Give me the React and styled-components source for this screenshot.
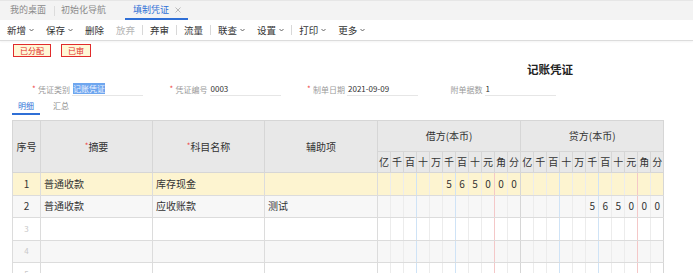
import React from 'react';
import styled, { createGlobalStyle, css } from 'styled-components';

/* --------------------  global  --------------------*/

const GlobalStyle = createGlobalStyle`
  html, body {
    margin: 0;
    padding: 0;
    overflow: hidden;
    background: #fff;
  }
  body {
    font-family: "Noto Sans CJK SC", "Noto Sans", sans-serif;
    color: #333;
  }
`;

/* --------------------  tab bar  --------------------*/

const TabBar = styled.div`
  display: flex;
  align-items: stretch;
  height: 20px;
  box-sizing: border-box;
  padding-left: 2px;
  background: #f3f3f3;
  border-top: 1px solid #e6e6e6;
`;

const Tab = styled.div`
  display: flex;
  align-items: center;
  gap: 6px;
  padding: 0 8px 0 ${p => (p.$tight ? '6px' : '8px')};
  font-size: 9px;
  line-height: 12px;
  color: #8a8a8a;
  border-bottom: 2px solid transparent;
  box-sizing: border-box;

  ${p =>
    p.$active &&
    css`
      margin-left: 11px;
      padding: 0 7px 0 8px;
      color: #2f6fd6;
      border-bottom-color: #2f6fd6;
    `};
`;

const TabDivider = styled.span`
  align-self: center;
  width: 1px;
  height: 10px;
  background: #dcdcdc;
`;

/* --------------------  toolbar  --------------------*/

const Toolbar = styled.div`
  display: flex;
  align-items: center;
  gap: 12px;
  height: 20px;
  padding-left: 7px;
  background: #fff;
  border-bottom: 1px solid #dcdcdc;
  box-shadow: 0 1px 2px rgba(0, 0, 0, 0.05);
`;

const ToolItem = styled.div`
  display: flex;
  align-items: center;
  gap: 3px;
  font-size: 9.5px;
  line-height: 12px;
  color: ${p => (p.$disabled ? '#b5b5b5' : '#333')};
`;

const ToolDivider = styled.span`
  width: 1px;
  height: 10px;
  margin: 0 -5px;
  background: #d8d8d8;
`;

const Chevron = () => (
  <svg width="5" height="4" viewBox="0 0 5 4">
    <polyline points="0.5,1 2.5,3 4.5,1" fill="none" stroke="#555" strokeWidth="0.9" />
  </svg>
);

const CloseIcon = () => (
  <svg width="6" height="6" viewBox="0 0 6 6">
    <path d="M0.5 0.5 L5.5 5.5 M5.5 0.5 L0.5 5.5" stroke="#aaa" strokeWidth="0.8" />
  </svg>
);

/* --------------------  header of the voucher  --------------------*/

const Content = styled.div`
  padding: 0 12px;
`;

const BadgeRow = styled.div`
  display: flex;
  gap: 10px;
  margin-top: 3px;
  padding-left: 1px;
`;

const Badge = styled.span`
  height: 13px;
  box-sizing: border-box;
  padding: 0 6px;
  border: 1px solid #e02b2b;
  background: #fff7d6;
  color: #e02b2b;
  font-size: 8px;
  line-height: 11px;
`;

const TitleRow = styled.div`
  margin-top: 5px;
  padding-left: 515px;
`;

const Title = styled.h1`
  margin: 0;
  font-size: 11.5px;
  line-height: 14px;
  font-weight: bold;
  color: #222;
`;

const FormRow = styled.div`
  display: grid;
  grid-template-columns: repeat(4, 137.5px);
  margin-top: 6px;
  padding-left: 20px;
`;

const Field = styled.div`
  display: flex;
  align-items: center;
  height: 14px;
`;

const Star = styled.span`
  width: 6px;
  color: ${p => (p.$hidden ? 'transparent' : '#f04848')};
  font-size: 8px;
  line-height: 10px;
`;

const Label = styled.span`
  width: 34px;
  font-size: 8px;
  color: #9a9a9a;
  white-space: nowrap;
`;

const Input = styled.div`
  width: 71px;
  height: 13px;
  box-sizing: border-box;
  padding-left: 1px;
  border-bottom: 1px solid #e6e6e6;
  font-size: 8px;
  line-height: 12px;
  color: #333;
`;

const Selected = styled.span`
  background: #6ea6ef;
  color: #eef4ff;
`;

const SubTabs = styled.div`
  display: flex;
  gap: 7px;
  margin-top: 1px;
`;

const SubTab = styled.div`
  padding: 0 6px;
  height: 18px;
  box-sizing: border-box;
  font-size: 8px;
  line-height: 17px;
  color: ${p => (p.$active ? '#2f6fd6' : '#8a8a8a')};
  border-bottom: 2px solid ${p => (p.$active ? '#2f6fd6' : 'transparent')};
`;

/* --------------------  table  --------------------*/

const Table = styled.table`
  margin-top: 5px;
  width: 651px;
  table-layout: fixed;
  border-collapse: collapse;
  font-size: 10px;
  color: #333;
`;

const Th = styled.th`
  height: ${p => (p.$sub ? '20.5px' : '29.5px')};
  padding: 0;
  background: #e8e8e8;
  border: 1px solid #d6d6d6;
  font-weight: normal;
  text-align: center;
  line-height: 12px;
`;

const Req = styled.span`
  color: #f04848;
  font-size: 8px;
  vertical-align: 2px;
`;

const Row = styled.tr`
  background: ${p => p.$bg};
`;

const Td = styled.td`
  height: 21.5px;
  padding: 0 3px;
  border: 1px solid #dcdcdc;
  text-align: left;
  white-space: nowrap;
  line-height: 12px;
`;

const SeqCell = styled(Td)`
  text-align: center;
  color: ${p => (p.$faint ? '#c8c8c8' : '#333')};
  font-size: ${p => (p.$faint ? '8px' : '10px')};
`;

const lineColor = i => {
  if (i === 2 || i === 5) return '#cfe3f6';
  if (i === 8) return '#f4c8c8';
  if (i === 10) return '#d6d6d6';
  return '#ececec';
};

const DigitCell = styled.td`
  height: 21.5px;
  padding: 0;
  text-align: center;
  border-top: 1px solid #dcdcdc;
  border-bottom: 1px solid #dcdcdc;
  border-right: 1px solid ${p => lineColor(p.$i)};
  line-height: 12px;
`;

const UNITS = ['亿', '千', '百', '十', '万', '千', '百', '十', '元', '角', '分'];
const AMOUNT = ['', '', '', '', '', '5', '6', '5', '0', '0', '0'];
const BLANK = UNITS.map(() => '');

const rows = [
  { seq: '1', summary: '普通收款', account: '库存现金', aux: '', debit: AMOUNT, credit: BLANK, bg: '#fdf4d0' },
  { seq: '2', summary: '普通收款', account: '应收账款', aux: '测试', debit: BLANK, credit: AMOUNT, bg: '#f7f7f7' },
  { seq: '3', faint: true, debit: BLANK, credit: BLANK, bg: '#fff' },
  { seq: '4', faint: true, debit: BLANK, credit: BLANK, bg: '#f7f7f7' },
  { seq: '5', faint: true, debit: BLANK, credit: BLANK, bg: '#fff' },
];

/* --------------------  App  --------------------*/

function App() {
  return (
    <>
      <GlobalStyle />
      <TabBar>
        <Tab>我的桌面</Tab>
        <TabDivider />
        <Tab $tight>初始化导航</Tab>
        <Tab $active>
          填制凭证
          <CloseIcon />
        </Tab>
      </TabBar>

      <Toolbar>
        <ToolItem>新增<Chevron /></ToolItem>
        <ToolItem>保存<Chevron /></ToolItem>
        <ToolItem>删除</ToolItem>
        <ToolItem $disabled>放弃</ToolItem>
        <ToolDivider />
        <ToolItem>弃审</ToolItem>
        <ToolDivider />
        <ToolItem>流量</ToolItem>
        <ToolDivider />
        <ToolItem>联查<Chevron /></ToolItem>
        <ToolItem>设置<Chevron /></ToolItem>
        <ToolDivider />
        <ToolItem>打印<Chevron /></ToolItem>
        <ToolItem>更多<Chevron /></ToolItem>
      </Toolbar>

      <Content>
        <BadgeRow>
          <Badge>已分配</Badge>
          <Badge>已审</Badge>
        </BadgeRow>

        <TitleRow>
          <Title>记账凭证</Title>
        </TitleRow>

        <FormRow>
          <Field>
            <Star>*</Star>
            <Label>凭证类别</Label>
            <Input><Selected>记账凭证</Selected></Input>
          </Field>
          <Field>
            <Star>*</Star>
            <Label>凭证编号</Label>
            <Input>0003</Input>
          </Field>
          <Field>
            <Star>*</Star>
            <Label>制单日期</Label>
            <Input>2021-09-09</Input>
          </Field>
          <Field>
            <Star $hidden>*</Star>
            <Label>附单据数</Label>
            <Input>1</Input>
          </Field>
        </FormRow>

        <SubTabs>
          <SubTab $active>明细</SubTab>
          <SubTab>汇总</SubTab>
        </SubTabs>

        <Table>
          <colgroup>
            <col width="28" />
            <col width="112" />
            <col width="112" />
            <col width="113" />
            {UNITS.map((_, i) => <col key={'d' + i} width="13" />)}
            {UNITS.map((_, i) => <col key={'c' + i} width="13" />)}
          </colgroup>
          <thead>
            <tr>
              <Th rowSpan={2}>序号</Th>
              <Th rowSpan={2}><Req>*</Req>摘要</Th>
              <Th rowSpan={2}><Req>*</Req>科目名称</Th>
              <Th rowSpan={2}>辅助项</Th>
              <Th colSpan={11}>借方(本币)</Th>
              <Th colSpan={11}>贷方(本币)</Th>
            </tr>
            <tr>
              {UNITS.map((u, i) => <Th $sub key={'hd' + i}>{u}</Th>)}
              {UNITS.map((u, i) => <Th $sub key={'hc' + i}>{u}</Th>)}
            </tr>
          </thead>
          <tbody>
            {rows.map(r => (
              <Row key={r.seq} $bg={r.bg}>
                <SeqCell $faint={r.faint}>{r.seq}</SeqCell>
                <Td>{r.summary}</Td>
                <Td>{r.account}</Td>
                <Td>{r.aux}</Td>
                {r.debit.map((v, i) => <DigitCell key={'d' + i} $i={i}>{v}</DigitCell>)}
                {r.credit.map((v, i) => <DigitCell key={'c' + i} $i={i}>{v}</DigitCell>)}
              </Row>
            ))}
          </tbody>
        </Table>
      </Content>
    </>
  );
}

export default App;
